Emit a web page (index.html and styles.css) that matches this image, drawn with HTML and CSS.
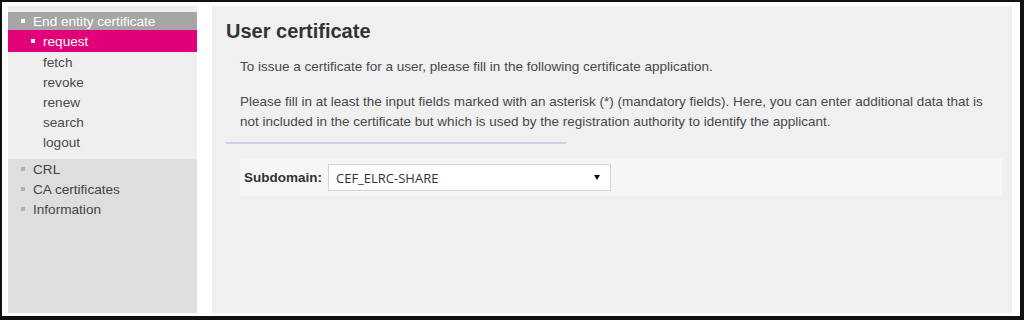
FILE: index.html
```html
<!DOCTYPE html>
<html lang="en">
<head>
  <meta charset="UTF-8" />
  <title>User certificate</title>
  <link rel="stylesheet" href="styles.css">
</head>
<body>
  <div class="frame">
    <div class="sidebar">
      <ul class="menu menu-top">
        <li class="menu-head"><span class="bullet"></span>End entity certificate</li>
        <li class="menu-active"><span class="bullet"></span>request</li>
        <li class="menu-sub">fetch</li>
        <li class="menu-sub">revoke</li>
        <li class="menu-sub">renew</li>
        <li class="menu-sub">search</li>
        <li class="menu-sub">logout</li>
      </ul>
      <ul class="menu menu-bottom">
        <li><span class="bullet"></span>CRL</li>
        <li><span class="bullet"></span>CA certificates</li>
        <li><span class="bullet"></span>Information</li>
      </ul>
    </div>

    <div class="main">
      <h1>User certificate</h1>
      <p>To issue a certificate for a user, please fill in the following certificate application.</p>
      <p>Please fill in at least the input fields marked with an asterisk (*) (mandatory fields). Here, you can enter additional data that is not included in the certificate but which is used by the registration authority to identify the applicant.</p>
      <div class="separator"></div>

      <div class="form-row">
        <label>Subdomain:</label>
        <div class="select">
          <span>CEF_ELRC-SHARE</span>
          <span class="arrow"></span>
        </div>
      </div>
    </div>
  </div>
</body>
</html>
```

FILE: styles.css
```css
html, body {
  margin: 0;
  background: #fff;
}

body {
  font-family: "Liberation Sans", Arial, sans-serif;
  color: #444;
}

.frame {
  width: 1024px;
  height: 320px;
  box-sizing: border-box;
  border: 2px solid #111;
  border-right-width: 4px;
  border-bottom-width: 4px;
  padding: 4px 8px 3px 6px;
  display: flex;
  gap: 15px;
}

/* menu lateral */
.sidebar {
  width: 189px;
  display: flex;
  flex-direction: column;
  font-size: 13.6px;
}

.menu {
  list-style: none;
  margin: 0;
}

.menu li {
  display: flex;
  align-items: center;
}

.menu-top {
  background: #efefef;
  padding: 6px 0 7px 0;
}

.menu-head {
  height: 18px;
  background: #a6a6a6;
  color: #fff;
  padding-left: 13px;
}

.menu-active {
  height: 22px;
  background: #e2007a;
  color: #fff;
  padding-left: 23px;
}

.menu-sub {
  height: 20px;
  padding-left: 35px;
  color: #4a4a4a;
}

.bullet {
  width: 4px;
  height: 4px;
  background: #fff;
  margin-right: 8px;
}

.menu-bottom {
  flex: 1;
  background: #dedede;
  padding: 0;
}

.menu-bottom li {
  height: 20px;
  padding-left: 13px;
}

.menu-bottom .bullet {
  background: #b0b0b0;
  margin-right: 8px;
}

/* conteudo */
.main {
  flex: 1;
  background: #f0f0f0;
  padding: 13px 10px 0 14px;
}

h1 {
  margin: 0 0 14px 0;
  font-size: 20px;
  line-height: 24px;
  color: #333;
}

p {
  margin: 0 2px 15px 14px;
  font-size: 13.5px;
  line-height: 20px;
  color: #484848;
}

.separator {
  width: 340px;
  height: 2px;
  background: #cfd0ea;
  margin: -5px 0 14px 0;
}

.form-row {
  margin-left: 14px;
  background: #f6f6f6;
  padding: 6px 0 5px 4px;
  display: flex;
  align-items: center;
  gap: 6px;
}

.form-row label {
  font-size: 13.5px;
  font-weight: bold;
  color: #333;
}

.select {
  width: 283px;
  height: 27px;
  box-sizing: border-box;
  background: #fff;
  border: 1px solid #d4d4d4;
  display: flex;
  align-items: center;
  justify-content: space-between;
  padding: 0 10px 0 7px;
  font-family: "Open Sans", sans-serif;
  font-size: 13px;
  color: #333;
}

.arrow {
  width: 0;
  height: 0;
  border-left: 3px solid transparent;
  border-right: 3px solid transparent;
  border-top: 5px solid #111;
}
```
